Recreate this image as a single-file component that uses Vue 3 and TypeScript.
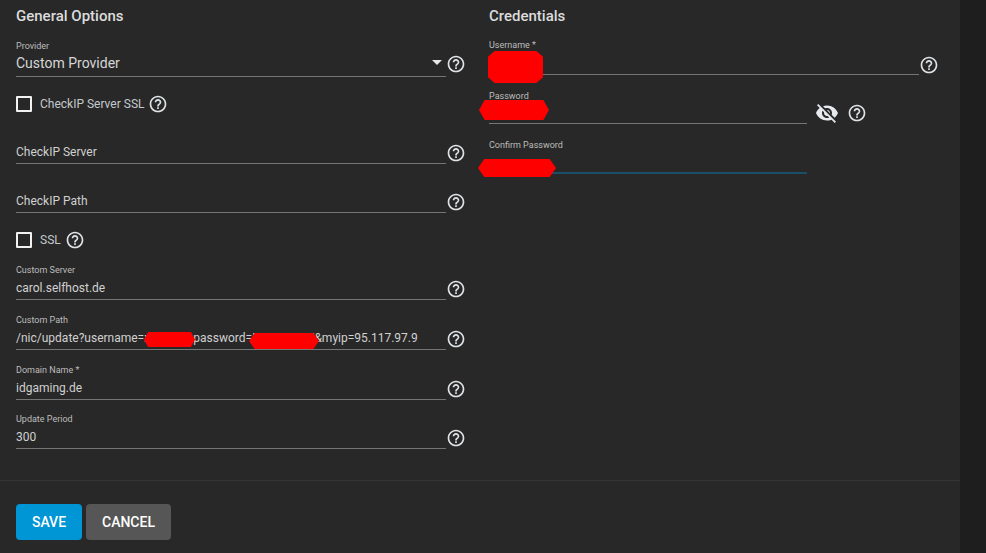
<script setup lang="ts">
interface Field { label?: string; value?: string; placeholder?: string; check?: boolean; select?: boolean }
const left: Field[] = [
  { label: 'Provider', value: 'Custom Provider', select: true },
  { check: true, value: 'CheckIP Server SSL' },
  { placeholder: 'CheckIP Server' },
  { placeholder: 'CheckIP Path' },
  { check: true, value: 'SSL' },
  { label: 'Custom Server', value: 'carol.selfhost.de' },
  { label: 'Custom Path', value: '/nic/update?username=xxxxxxx&password=Dxxxxxxxx7&myip=95.117.97.9' },
  { label: 'Domain Name *', value: 'idgaming.de' },
  { label: 'Update Period', value: '300' },
]
const helpPath = 'M11 18h2v-2h-2v2zm1-16C6.48 2 2 6.48 2 12s4.48 10 10 10 10-4.48 10-10S17.52 2 12 2zm0 18c-4.41 0-8-3.59-8-8s3.59-8 8-8 8 3.59 8 8-3.59 8-8 8zm0-14c-2.21 0-4 1.79-4 4h2c0-1.1.9-2 2-2s2 .9 2 2c0 2-3 1.75-3 5h2c0-2.25 3-2.5 3-5 0-2.21-1.79-4-4-4z'
const eyePath = 'M12 7c2.76 0 5 2.24 5 5 0 .65-.13 1.26-.36 1.83l2.92 2.92c1.51-1.26 2.7-2.89 3.43-4.75-1.73-4.39-6-7.5-11-7.5-1.4 0-2.74.25-3.98.7l2.16 2.16C10.74 7.13 11.35 7 12 7zM2 4.27l2.28 2.28.46.46C3.08 8.3 1.78 10.02 1 12c1.73 4.39 6 7.5 11 7.5 1.55 0 3.03-.3 4.38-.84l.42.42L19.73 22 21 20.73 3.27 3 2 4.27zM7.53 9.8l1.55 1.55c-.05.21-.08.43-.08.65 0 1.66 1.34 3 3 3 .22 0 .44-.03.65-.08l1.55 1.55c-.67.33-1.41.53-2.2.53-2.76 0-5-2.24-5-5 0-.79.2-1.53.53-2.2zm4.31-.78l3.15 3.15.02-.16c0-1.66-1.34-3-3-3l-.17.01z'
</script>

<template>
  <div class="page">
    <main class="card">
      <div class="columns">
        <section class="col col-left">
          <h3 class="title">General Options</h3>
          <template v-for="f in left" :key="f.label ?? f.value ?? f.placeholder">
            <div v-if="f.check" class="check-row">
              <span class="box"></span>
              <span class="check-label">{{ f.value }}</span>
              <svg class="help" viewBox="0 0 24 24"><path :d="helpPath" /></svg>
            </div>
            <div v-else class="row" :class="{ sel: f.select }">
              <div class="input" :class="{ tall: f.select }">
                <label class="label">{{ f.label }}</label>
                <div class="value" :class="{ big: f.select }">{{ f.value ?? f.placeholder }}</div>
                <span v-if="f.select" class="caret"></span>
              </div>
              <svg class="help" viewBox="0 0 24 24"><path :d="helpPath" /></svg>
            </div>
          </template>
        </section>
        <section class="col col-right">
          <h3 class="title">Credentials</h3>
          <div class="row user">
            <div class="input">
              <label class="label">Username *</label>
              <div class="value">&nbsp;</div>
            </div>
            <svg class="help" viewBox="0 0 24 24"><path :d="helpPath" /></svg>
          </div>
          <div class="row pass">
            <div class="input narrow tiny">
              <label class="label">Password</label>
              <div class="value">&nbsp;</div>
            </div>
            <svg class="eye" viewBox="0 0 24 24"><path :d="eyePath" /></svg>
            <svg class="help help-pw" viewBox="0 0 24 24"><path :d="helpPath" /></svg>
          </div>
          <div class="row">
            <div class="input narrow focus">
              <label class="label">Confirm Password</label>
              <div class="value">&nbsp;</div>
            </div>
          </div>
        </section>
      </div>
      <footer class="footer">
        <button class="btn save" type="button">SAVE</button>
        <button class="btn cancel" type="button">CANCEL</button>
      </footer>
      <i class="blot b-user"></i>
      <i class="blot b-pass"></i>
      <i class="blot b-confirm"></i>
      <i class="blot b-path1"></i>
      <i class="blot b-path2"></i>
    </main>
  </div>
</template>

<style scoped>
.page {
  width: 986px;
  height: 553px;
  background: #1e1e1e;
  overflow: hidden;
  font-family: Roboto, "Liberation Sans", sans-serif;
}
.card {
  position: relative;
  width: 960px;
  height: 553px;
  background: #282828;
}
.columns {
  display: grid;
  grid-template-columns: 473px 1fr;
  height: 480px;
  border-bottom: 1px solid #353535;
}
.col { padding-left: 16px; }
.title {
  margin: 0;
  height: 27.3px;
  padding-top: 7px;
  box-sizing: border-box;
  font-size: 15px;
  line-height: 18px;
  font-weight: 500;
  color: #dcdcdc;
}
.row {
  display: flex;
  align-items: flex-end;
  height: 49.72px;
}
.row.user { height: 47.7px; }
.row.pass { height: 49px; }
.input {
  position: relative;
  display: flex;
  flex-direction: column;
  justify-content: space-between;
  width: 430px;
  height: 36px;
  box-sizing: border-box;
  border-bottom: 1px solid #757575;
}
.input.tall { height: 37px; }
.input.narrow { width: 318px; height: 35px; }
.input.tiny { height: 34px; }
.input.focus { border-bottom: 2px solid #1b4f69; }
.label {
  display: block;
  min-height: 12px;
  font-size: 9px;
  line-height: 12px;
  color: #bdbdbd;
}
.value {
  padding-bottom: 2px;
  font-size: 12px;
  line-height: 18px;
  color: #d0d0d0;
  white-space: nowrap;
}
.value.big { font-size: 14px; color: #d6d6d6; padding-bottom: 4px; }
.caret {
  position: absolute;
  right: 4px;
  top: 20px;
  width: 0;
  height: 0;
  border-left: 5px solid transparent;
  border-right: 5px solid transparent;
  border-top: 5px solid #e8e8e8;
}
.help {
  width: 20px;
  height: 20px;
  margin-bottom: 1px;
  fill: #dfe3e6;
  flex: none;
}
.sel .help { margin-bottom: 3px; }
.user .help { margin-bottom: 0; }
.help-pw { margin-left: 8px; }
.eye {
  width: 24px;
  height: 24px;
  margin: 0 0 -1px 8px;
  fill: #e6eaee;
  flex: none;
}
.check-row {
  display: flex;
  align-items: center;
  height: 37px;
  padding: 19px 0 2px;
  box-sizing: border-box;
}
.box {
  width: 16px;
  height: 16px;
  box-sizing: border-box;
  border: 2px solid #f2f2f2;
  border-radius: 1px;
  flex: none;
}
.check-label {
  margin-left: 8px;
  font-size: 12px;
  line-height: 16px;
  color: #c4c8cc;
}
.check-row .help { margin: 0 0 0 4px; }
.footer {
  display: flex;
  gap: 4px;
  padding: 23px 16px 0;
}
.btn {
  height: 36px;
  border: 0;
  border-radius: 4px;
  font-family: inherit;
  font-size: 14px;
  font-weight: 500;
  color: #fff;
  padding: 0;
}
.save { width: 66px; background: #0095d5; }
.cancel { width: 85px; background: #565656; }
.blot {
  position: absolute;
  display: block;
  background: #ff0000;
  clip-path: polygon(8% 0, 92% 0, 100% 50%, 92% 100%, 8% 100%, 0 50%);
}
.b-user { left: 488px; top: 51px; width: 55px; height: 32px; clip-path: polygon(12% 0, 88% 0, 100% 18%, 100% 82%, 88% 100%, 12% 100%, 0 82%, 0 18%); }
.b-pass { left: 479px; top: 100px; width: 70px; height: 20px; }
.b-confirm { left: 478px; top: 159px; width: 78px; height: 18px; }
.b-path1 { left: 144px; top: 332px; width: 51px; height: 15px; }
.b-path2 { left: 249px; top: 333px; width: 70px; height: 16px; }
</style>

<style>
html, body { margin: 0; background: #1e1e1e; }
</style>
